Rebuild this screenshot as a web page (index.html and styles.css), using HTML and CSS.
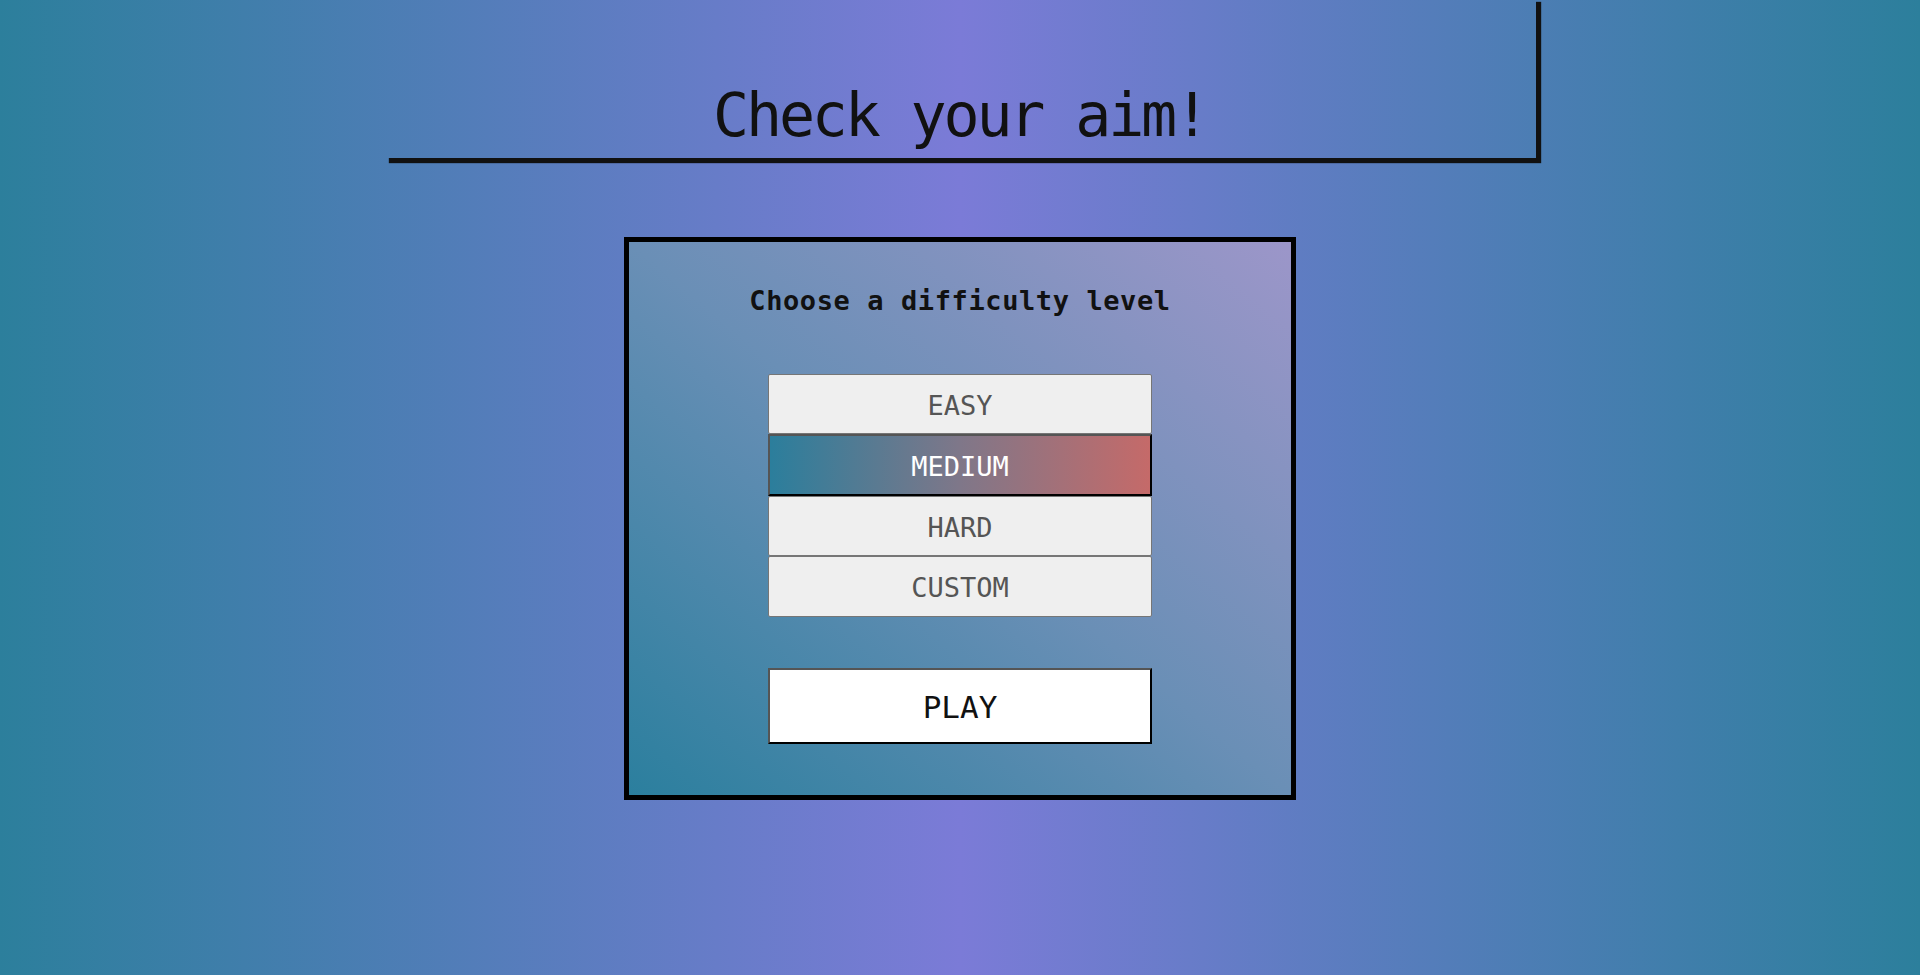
FILE: index.html
```html
<!DOCTYPE html>
<html lang="en">
<head>
<meta charset="utf-8">
<title>Check your aim!</title>
<link rel="stylesheet" href="styles.css">
</head>
<body>
<div class="page">
  <header class="banner">
    <h1 class="banner-title">Check your aim!</h1>
  </header>
  <main class="menu-card">
    <h2 class="menu-heading">Choose a difficulty level</h2>
    <div class="level-list">
      <button class="level-btn">EASY</button>
      <button class="level-btn level-btn--active">MEDIUM</button>
      <button class="level-btn">HARD</button>
      <button class="level-btn">CUSTOM</button>
    </div>
    <button class="play-btn">PLAY</button>
  </main>
</div>
</body>
</html>
```

FILE: styles.css
```css
* { box-sizing: border-box; }

html, body {
  margin: 0;
  padding: 0;
  height: 100%;
  overflow: hidden;
}

body {
  background: linear-gradient(to right, #2c7f9c 0%, #7b7bd7 50%, #2c7f9c 100%);
  font-family: "DejaVu Sans Mono", "Liberation Mono", monospace;
  color: #111;
}

.page {
  display: flex;
  flex-direction: column;
  align-items: center;
  min-height: 100%;
}

.banner {
  width: 60%;
  height: 161px;
  margin-top: -3px;
  display: flex;
  align-items: flex-end;
  justify-content: center;
  padding-bottom: 13px;
  box-shadow: 5px 5px 1px #111;
}

.banner-title {
  margin: 0;
  font-size: 60px;
  font-weight: normal;
  letter-spacing: -3.2px;
  line-height: 1;
  color: #111;
}

.menu-card {
  width: 35%;
  height: 563px;
  margin-top: 79px;
  border: 5px solid #000;
  background: linear-gradient(to top right, #2b7f9e 0%, #6a8fb6 50%, #9c96c9 100%);
  display: flex;
  flex-direction: column;
  align-items: center;
  padding-top: 42px;
}

.menu-heading {
  margin: 0;
  font-size: 27px;
  font-weight: bold;
  line-height: 34px;
  letter-spacing: 0.6px;
  color: #111;
}

.level-list {
  width: 384px;
  margin-top: 56px;
  display: flex;
  flex-direction: column;
}

.level-btn {
  height: 60px;
  margin: 0;
  border: 1px solid #767676;
  border-radius: 2px;
  background: #efefef;
  color: #555;
  font-family: "DejaVu Sans Mono", "Liberation Mono", monospace;
  font-size: 27px;
  padding: 2px 0 0;
}

.level-btn:last-child {
  height: 61px;
}

.level-btn--active {
  height: 62px;
  border-width: 2px;
  border-radius: 0;
  border-top-color: #555;
  border-left-color: #555;
  border-right-color: #000;
  border-bottom-color: #000;
  background: linear-gradient(to right, #2b7e9c 0%, #7f7789 50%, #c56a69 100%);
  color: #fff;
}

.play-btn {
  width: 384px;
  height: 76px;
  margin-top: 51px;
  border: 2px solid;
  border-color: #555 #000 #000 #555;
  background: #fff;
  color: #111;
  font-family: "DejaVu Sans Mono", "Liberation Mono", monospace;
  font-size: 31px;
  padding: 2px 0 0;
}
```
